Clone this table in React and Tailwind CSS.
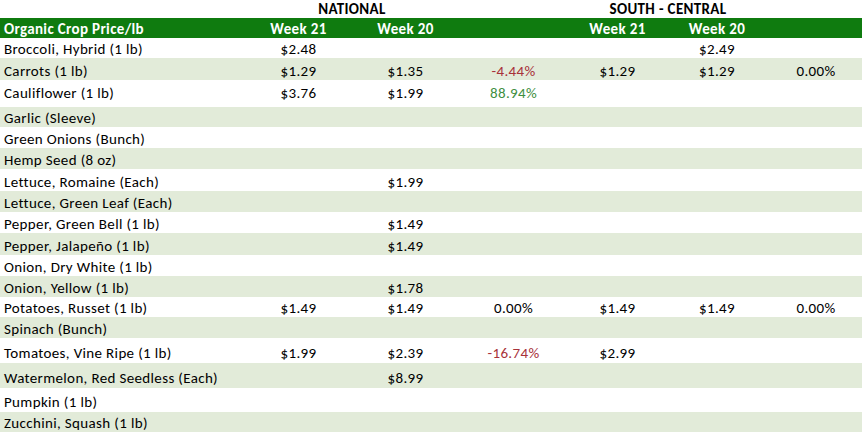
import React from 'react';

const rows = [
  // name, h, pb, nat21, nat20, natPct, sc21, sc20, scPct
  ['Broccoli, Hybrid (1 lb)', 20, 0, '$2.48', '', '', '', '$2.49', ''],
  ['Carrots (1 lb)', 22, 0, '$1.29', '$1.35', '-4.44%', '$1.29', '$1.29', '0.00%'],
  ['Cauliflower (1 lb)', 27, 5, '$3.76', '$1.99', '88.94%', '', '', ''],
  ['Garlic (Sleeve)', 20, 0, '', '', '', '', '', ''],
  ['Green Onions (Bunch)', 21, 0, '', '', '', '', '', ''],
  ['Hemp Seed (8 oz)', 21, 0, '', '', '', '', '', ''],
  ['Lettuce, Romaine (Each)', 22, 0, '', '$1.99', '', '', '', ''],
  ['Lettuce, Green Leaf (Each)', 21, 0, '', '', '', '', '', ''],
  ['Pepper, Green Bell (1 lb)', 21, 0, '', '$1.49', '', '', '', ''],
  ['Pepper, Jalapeño (1 lb)', 22, 0, '', '$1.49', '', '', '', ''],
  ['Onion, Dry White (1 lb)', 21, 0, '', '', '', '', '', ''],
  ['Onion, Yellow (1 lb)', 21, 0, '', '$1.78', '', '', '', ''],
  ['Potatoes, Russet (1 lb)', 20, 0, '$1.49', '$1.49', '0.00%', '$1.49', '$1.49', '0.00%'],
  ['Spinach (Bunch)', 21, 0, '', '', '', '', '', ''],
  ['Tomatoes, Vine Ripe (1 lb)', 25, 1, '$1.99', '$2.39', '-16.74%', '$2.99', '', ''],
  ['Watermelon, Red Seedless (Each)', 25, 1, '', '$8.99', '', '', '', ''],
  ['Pumpkin (1 lb)', 24, 1, '', '', '', '', '', ''],
  ['Zucchini, Squash (1 lb)', 20, 0, '', '', '', '', '', ''],
];

const colW = ['w-[107px]', 'w-[107px]', 'w-[109px]', 'w-[99px]', 'w-[100px]', 'w-[98px]'];

function pctColor(v) {
  if (v.startsWith('-')) return 'text-[#a8323a]';
  if (v === '0.00%' || v === '') return 'text-black';
  return 'text-[#3f8f3f]';
}

export default function App() {
  return (
    <div
      className="w-[862px] h-[432px] overflow-hidden bg-white text-[15px] text-black leading-[18px] tracking-[0.35px]"
      style={{ fontFamily: 'Carlito, Calibri, Lato, "Open Sans", sans-serif' }}
    >
      <div className="flex h-[18px] items-end font-bold">
        <div className="w-[245px] shrink-0" />
        <div className="w-[214px] shrink-0 text-center">NATIONAL</div>
        <div className="w-[109px] shrink-0" />
        <div className="w-[200px] shrink-0 text-center">SOUTH - CENTRAL</div>
      </div>

      <div className="flex h-[20px] items-end bg-[#0f7b0f] text-white font-bold">
        <div className="w-[245px] shrink-0 pl-[4px]">Organic Crop Price/lb</div>
        <div className={`${colW[0]} shrink-0 text-center`}>Week 21</div>
        <div className={`${colW[1]} shrink-0 text-center`}>Week 20</div>
        <div className={`${colW[2]} shrink-0`} />
        <div className={`${colW[3]} shrink-0 text-center`}>Week 21</div>
        <div className={`${colW[4]} shrink-0 text-center`}>Week 20</div>
      </div>

      {rows.map((r, i) => (
        <div
          key={r[0]}
          className={`flex items-end ${i % 2 === 1 ? 'bg-[#e2ebd9]' : 'bg-white'}`}
          style={{ height: r[1], paddingBottom: r[2] }}
        >
          <div className="w-[245px] shrink-0 pl-[4px] whitespace-nowrap">{r[0]}</div>
          <div className={`${colW[0]} shrink-0 text-center`}>{r[3]}</div>
          <div className={`${colW[1]} shrink-0 text-center`}>{r[4]}</div>
          <div className={`${colW[2]} shrink-0 text-center ${pctColor(r[5])}`}>{r[5]}</div>
          <div className={`${colW[3]} shrink-0 text-center`}>{r[6]}</div>
          <div className={`${colW[4]} shrink-0 text-center`}>{r[7]}</div>
          <div className={`${colW[5]} shrink-0 text-center ${pctColor(r[8])}`}>{r[8]}</div>
        </div>
      ))}
    </div>
  );
}
